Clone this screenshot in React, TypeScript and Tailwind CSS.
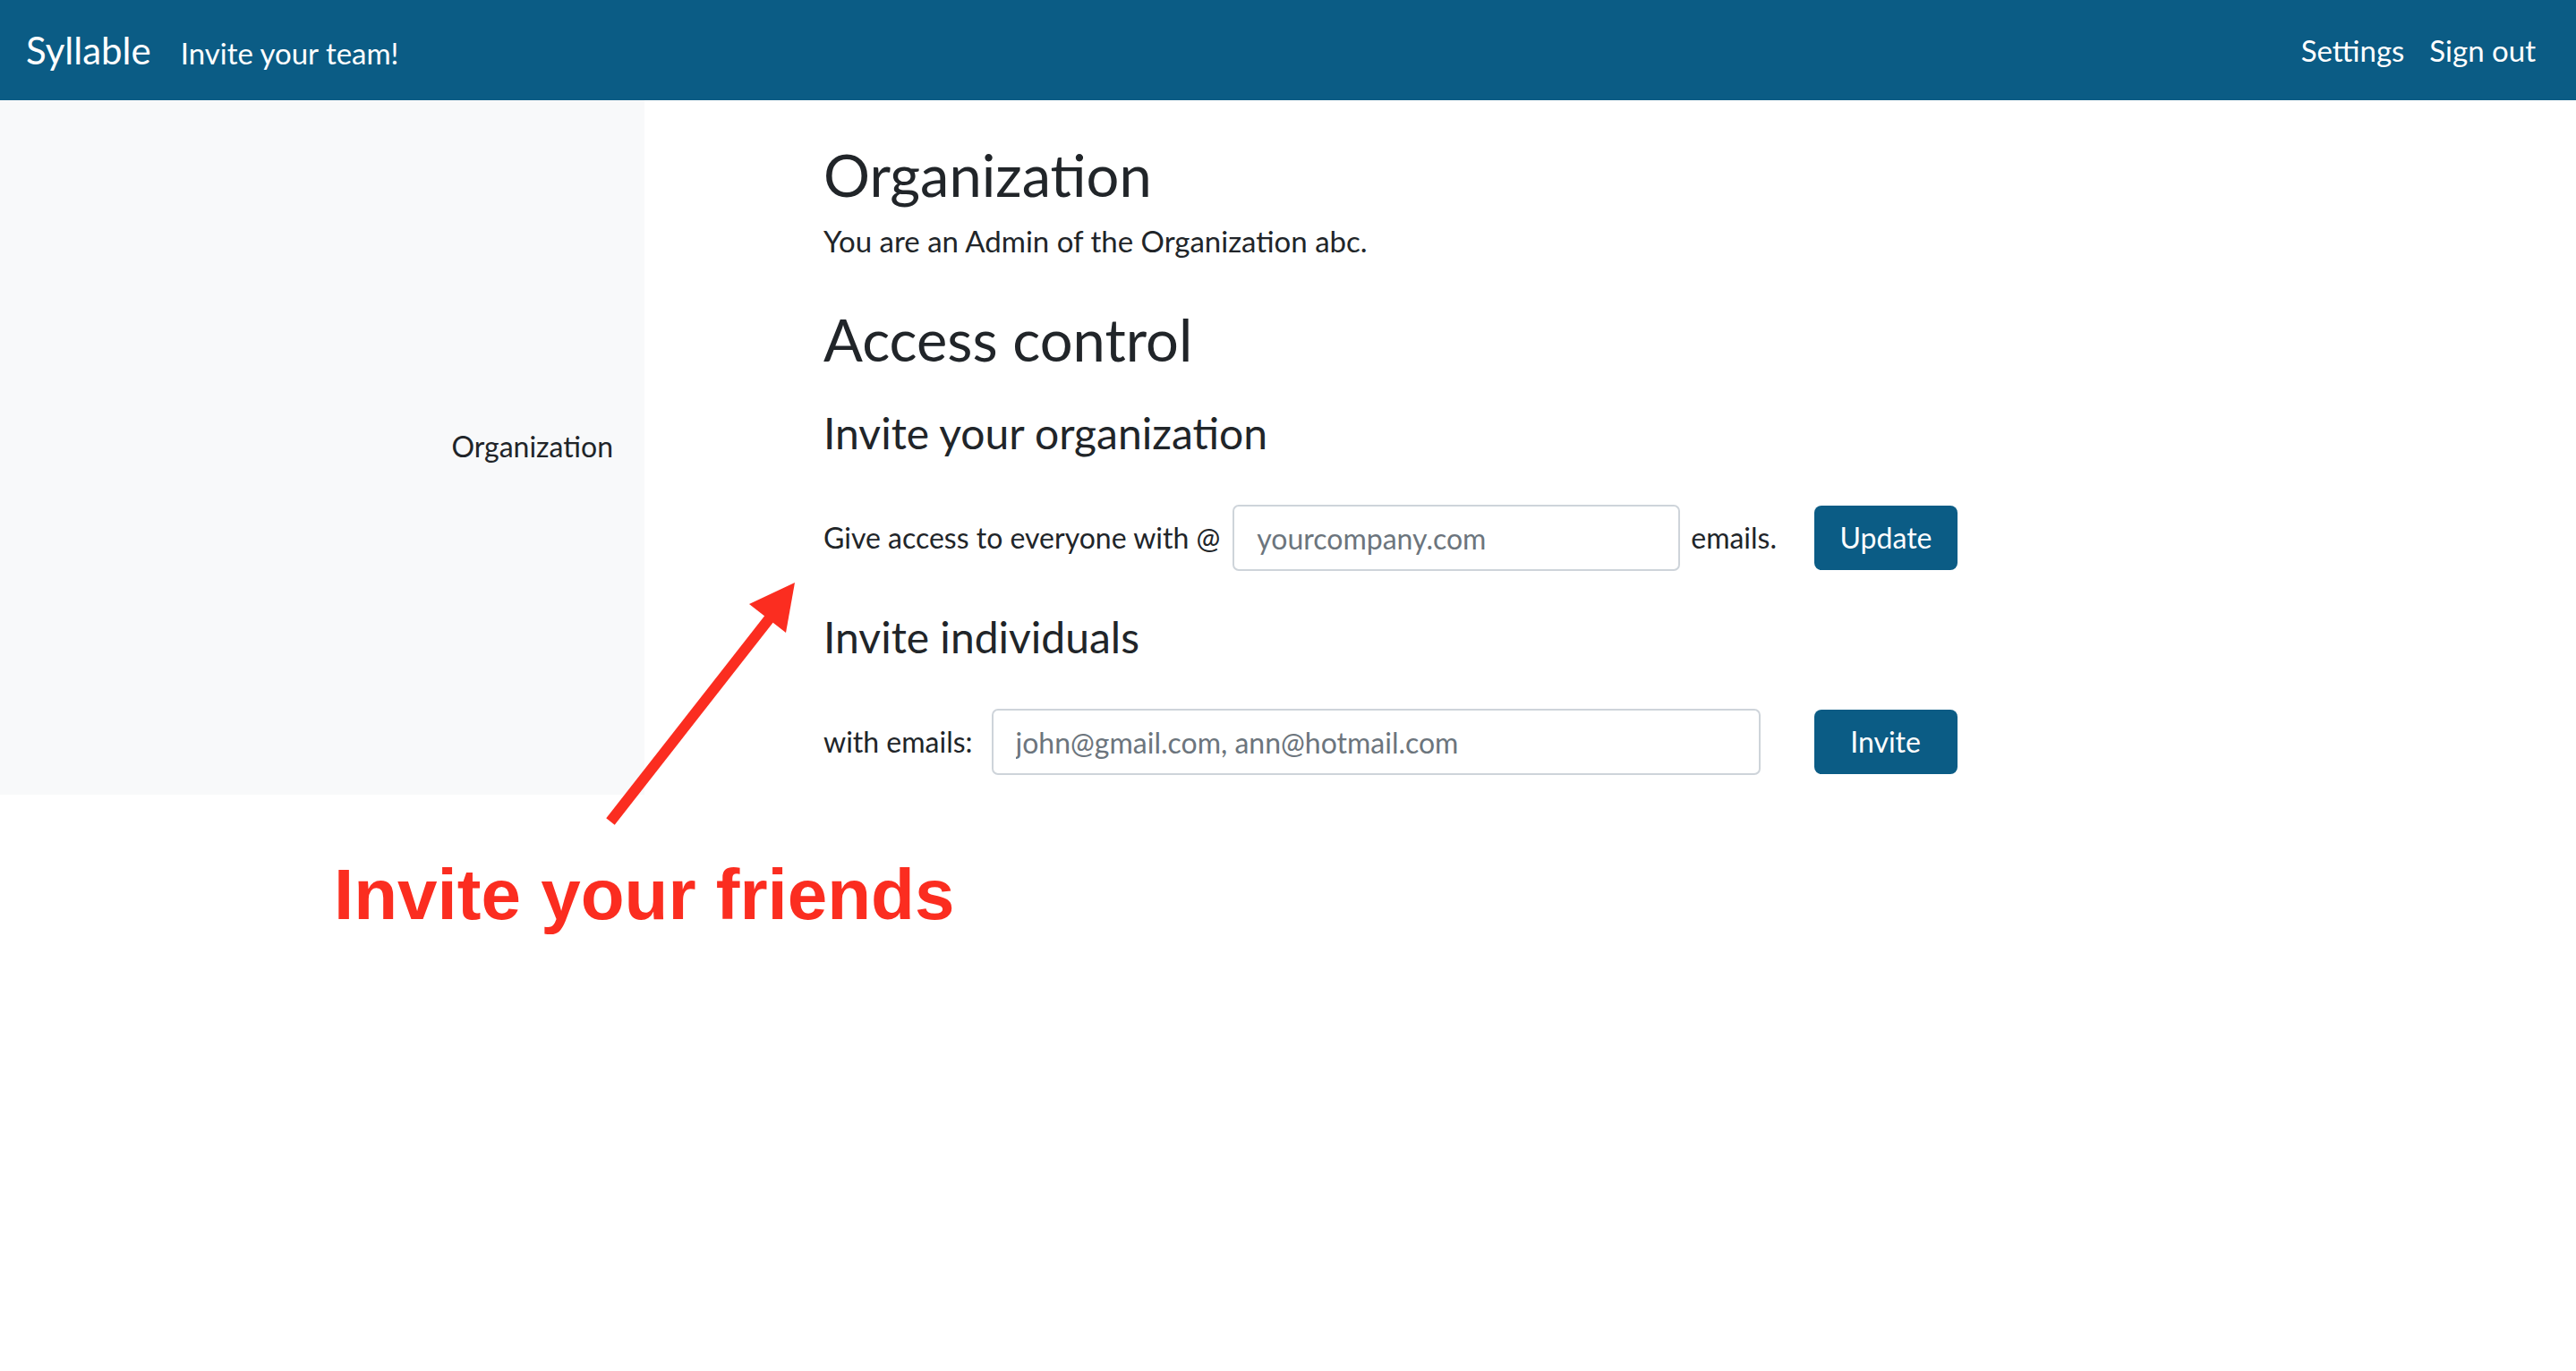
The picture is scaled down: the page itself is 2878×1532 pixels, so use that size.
import React from "react";

export default function App() {
  const font = { fontFamily: "Lato, 'Open Sans', sans-serif" };
  return (
    <div className="relative min-h-[1532px] w-full bg-white text-[#212529]" style={font}>
      <header className="flex h-[112px] items-center justify-between bg-[#0b5c85] pl-[29px] pr-[45px] text-white">
        <div className="flex items-baseline">
          <span className="text-[42px] leading-none">Syllable</span>
          <span className="ml-[33px] text-[33px] leading-none">Invite your team!</span>
        </div>
        <nav className="flex items-baseline gap-[28px] text-[33px] leading-none">
          <a>Settings</a>
          <a>Sign out</a>
        </nav>
      </header>
      <div className="flex">
        <aside className="h-[776px] w-[720px] shrink-0 bg-[#f8f9fa] pr-[35px] pt-[363px] text-right">
          <div className="text-[32px] leading-[1.5]">Organization</div>
        </aside>
        <main className="pl-[200px] pt-[44px]">
          <h1 className="text-[65px] leading-[1.2]">Organization</h1>
          <p className="mt-[12px] text-[33px] leading-[1.45]">You are an Admin of the Organization abc.</p>
          <h2 className="mt-[46px] text-[65px] leading-[1.2]">Access control</h2>
          <h3 className="mt-[37px] text-[48px] leading-[1.2]">Invite your organization</h3>
          <div className="mt-[52px] flex h-[74px] items-center text-[32px]">
            <span>Give access to everyone with @</span>
            <input
              className="ml-[14px] h-[74px] w-[500px] rounded-[7px] border-2 border-[#ced4da] px-[25px] text-[32px] placeholder:text-[#6c757d] outline-none"
              placeholder="yourcompany.com"
            />
            <span className="ml-[12px]">emails.</span>
            <button className="ml-[42px] h-[72px] w-[160px] rounded-[8px] bg-[#0b5c85] text-[32px] text-white">Update</button>
          </div>
          <h3 className="mt-[45px] text-[48px] leading-[1.2]">Invite individuals</h3>
          <div className="mt-[51px] flex h-[74px] items-center text-[32px]">
            <span>with emails:</span>
            <input
              className="ml-[21px] h-[74px] w-[859px] rounded-[7px] border-2 border-[#ced4da] px-[25px] text-[32px] placeholder:text-[#6c757d] outline-none"
              placeholder="john@gmail.com, ann@hotmail.com"
            />
            <button className="ml-[60px] h-[72px] w-[160px] rounded-[8px] bg-[#0b5c85] text-[32px] text-white">Invite</button>
          </div>
        </main>
      </div>

      <svg className="pointer-events-none absolute left-0 top-0" width="2878" height="1532">
        <line x1="682" y1="918" x2="862" y2="688" stroke="#fb2d20" strokeWidth="12" />
        <polygon points="888,651 878,707 837,675" fill="#fb2d20" />
      </svg>
      <div
        className="absolute left-[373px] top-[960px] text-[80px] font-bold leading-none text-[#fb2d20]"
        style={{ fontFamily: "'Liberation Sans', Arial, sans-serif" }}
      >
        Invite your friends
      </div>
    </div>
  );
}
